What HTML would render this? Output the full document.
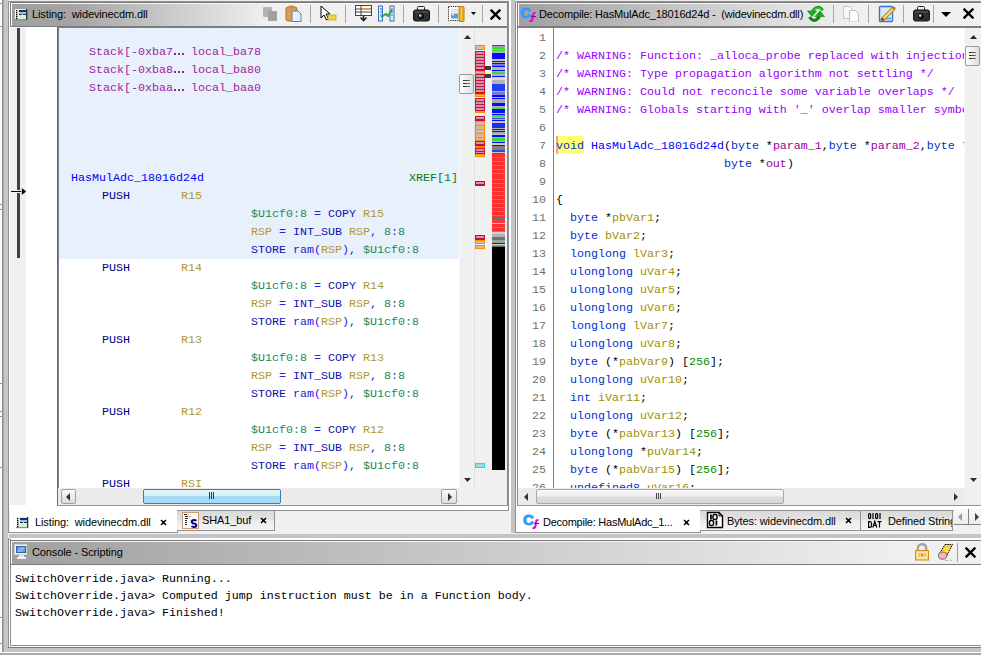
<!DOCTYPE html><html><head><meta charset="utf-8"><style>
html,body{margin:0;padding:0;width:981px;height:655px;overflow:hidden;background:#f0f0f0;position:relative}
div{position:absolute;box-sizing:border-box}
.m{font-family:"Liberation Mono",monospace;font-size:11.667px;line-height:18px;white-space:pre}
.u{font-family:"Liberation Sans",sans-serif;font-size:11px;line-height:13px;white-space:pre;letter-spacing:-0.12px}
</style></head><body>
<div style="left:0px;top:0px;width:2px;height:655px;background:#fbfbfb"></div><div style="left:2px;top:0px;width:1px;height:655px;background:#8e8e8e"></div><div style="left:0px;top:3px;width:2px;height:1px;background:#9a9a9a"></div><div style="left:0px;top:26px;width:2px;height:1px;background:#9a9a9a"></div><div style="left:0px;top:204px;width:2px;height:1px;background:#9a9a9a"></div><div style="left:0px;top:209px;width:2px;height:1px;background:#9a9a9a"></div><div style="left:0px;top:383px;width:2px;height:1px;background:#9a9a9a"></div><div style="left:0px;top:411px;width:2px;height:1px;background:#9a9a9a"></div><div style="left:0px;top:416px;width:2px;height:1px;background:#9a9a9a"></div><div style="left:0px;top:467px;width:2px;height:1px;background:#9a9a9a"></div><div style="left:0px;top:617px;width:2px;height:1px;background:#9a9a9a"></div><div style="left:0px;top:643px;width:2px;height:1px;background:#9a9a9a"></div><div style="left:3px;top:0px;width:5px;height:655px;background:#c6c6c6"></div><div style="left:3px;top:0px;width:1px;height:655px;background:#a8a8a8"></div><div style="left:8px;top:1px;width:501px;height:510px;border:1px solid #8e9298;border-bottom:none;background:#fff"></div><div style="left:10px;top:2px;width:498px;height:25px;border:1px solid #7a7a7a;border-right:none;background:linear-gradient(to right,#a0a0a0 0px,#a4a4a4 60px,#f0f0f0 258px,#f0f0f0 100%)"></div><div style="left:11px;top:3px;width:496px;height:1px;background:#f4f4f4"></div><div style="left:11px;top:3px;width:1px;height:23px;background:#ffffff"></div><div style="left:507px;top:2px;width:1px;height:504px;background:#7e848c"></div><div class="u" style="left:32px;top:8px;color:#000;">Listing:  widevinecdm.dll</div><div style="left:10px;top:27px;width:497px;height:478px;background:#ffffff"></div><div style="left:10px;top:28px;width:16px;height:477px;background:#efefef"></div><div style="left:17px;top:28px;width:3px;height:230px;background:#404040"></div><div style="left:16px;top:190px;width:5px;height:3px;background:#efefef"></div><div style="left:11px;top:191px;width:12px;height:1px;background:#000"></div><svg style="position:absolute;left:21px;top:187px" width="6" height="9" viewBox="0 0 6 9"><path d="M0.5 0.5 L5.5 4.5 L0.5 8.5 Z" fill="#000" stroke="#fff" stroke-width="0.6"/></svg><div style="left:57px;top:27px;width:1px;height:478px;background:#6a6a6a"></div><div style="left:58px;top:27px;width:1px;height:461px;background:#7a8090"></div><div style="left:58px;top:27px;width:449px;height:1px;background:#7a8090"></div><div style="left:59px;top:28px;width:400px;height:231px;background:#e8f0fc"></div><div style="left:459px;top:28px;width:15px;height:460px;background:#f0f0f0"></div><div style="left:459px;top:28px;width:1px;height:460px;background:#fafafa"></div><svg style="position:absolute;left:464px;top:35px" width="7" height="4" viewBox="0 0 7 4"><path d="M0 4 L3.5 0 L7 4 Z" fill="#2a2a2a"/></svg><svg style="position:absolute;left:464px;top:478px" width="7" height="4" viewBox="0 0 7 4"><path d="M0 0 L3.5 4 L7 0 Z" fill="#2a2a2a"/></svg><div style="left:459px;top:74px;width:15px;height:20px;border:1px solid #9a9a9a;border-radius:2px;background:linear-gradient(to right,#fdfdfd,#e0e0e0)"></div><div style="left:463px;top:80px;width:7px;height:1px;background:linear-gradient(to right,#222,#777)"></div><div style="left:463px;top:83px;width:7px;height:1px;background:linear-gradient(to right,#222,#777)"></div><div style="left:463px;top:86px;width:7px;height:1px;background:linear-gradient(to right,#222,#777)"></div><div style="left:474px;top:28px;width:33px;height:477px;background:#f0f0f0"></div><div style="left:474px;top:28px;width:1px;height:460px;background:#e2e2e2"></div><div style="left:475px;top:45px;width:10px;height:5px;border:1px solid #ff8a00;background:repeating-linear-gradient(to bottom,#d8b898 0px,#d8b898 3px,#f09030 3px,#f09030 4px)"></div><div style="left:475px;top:51px;width:10px;height:20px;border:1px solid #c8103c;background:repeating-linear-gradient(to bottom,#c898a8 0px,#c898a8 2px,#c81040 2px,#c81040 3px)"></div><div style="left:475px;top:71px;width:10px;height:3px;border:1px solid #ff8a00;background:repeating-linear-gradient(to bottom,#d8b898 0px,#d8b898 3px,#f09030 3px,#f09030 4px)"></div><div style="left:475px;top:74px;width:10px;height:20px;border:1px solid #c8103c;background:repeating-linear-gradient(to bottom,#c898a8 0px,#c898a8 2px,#c81040 2px,#c81040 3px)"></div><div style="left:475px;top:94px;width:10px;height:3px;border:1px solid #ff8a00;background:repeating-linear-gradient(to bottom,#d8b898 0px,#d8b898 3px,#f09030 3px,#f09030 4px)"></div><div style="left:475px;top:98px;width:10px;height:13px;border:1px solid #c8103c;background:repeating-linear-gradient(to bottom,#c898a8 0px,#c898a8 2px,#c81040 2px,#c81040 3px)"></div><div style="left:475px;top:111px;width:10px;height:2px;border:1px solid #ff8a00;background:repeating-linear-gradient(to bottom,#d8b898 0px,#d8b898 3px,#f09030 3px,#f09030 4px)"></div><div style="left:475px;top:116px;width:10px;height:5px;border:1px solid #c8103c;background:repeating-linear-gradient(to bottom,#c898a8 0px,#c898a8 2px,#c81040 2px,#c81040 3px)"></div><div style="left:475px;top:121px;width:10px;height:20px;border:1px solid #ff8a00;background:repeating-linear-gradient(to bottom,#d8b898 0px,#d8b898 3px,#f09030 3px,#f09030 4px)"></div><div style="left:475px;top:141px;width:10px;height:5px;border:1px solid #c8103c;background:repeating-linear-gradient(to bottom,#c898a8 0px,#c898a8 2px,#c81040 2px,#c81040 3px)"></div><div style="left:475px;top:146px;width:10px;height:1px;border:1px solid #ff8a00;background:repeating-linear-gradient(to bottom,#d8b898 0px,#d8b898 3px,#f09030 3px,#f09030 4px)"></div><div style="left:475px;top:148px;width:10px;height:6px;border:1px solid #c8103c;background:repeating-linear-gradient(to bottom,#c898a8 0px,#c898a8 2px,#c81040 2px,#c81040 3px)"></div><div style="left:475px;top:154px;width:10px;height:3px;border:1px solid #ff8a00;background:repeating-linear-gradient(to bottom,#d8b898 0px,#d8b898 3px,#f09030 3px,#f09030 4px)"></div><div style="left:475px;top:181px;width:10px;height:5px;border:1px solid #c8103c;background:repeating-linear-gradient(to bottom,#c898a8 0px,#c898a8 2px,#c81040 2px,#c81040 3px)"></div><div style="left:475px;top:235px;width:10px;height:5px;border:1px solid #c8103c;background:repeating-linear-gradient(to bottom,#c898a8 0px,#c898a8 2px,#c81040 2px,#c81040 3px)"></div><div style="left:475px;top:240px;width:10px;height:4px;border:1px solid #ff8a00;background:repeating-linear-gradient(to bottom,#d8b898 0px,#d8b898 3px,#f09030 3px,#f09030 4px)"></div><div style="left:475px;top:245px;width:10px;height:4px;border:1px solid #ff8a00;background:repeating-linear-gradient(to bottom,#d8b898 0px,#d8b898 3px,#f09030 3px,#f09030 4px)"></div><div style="left:475px;top:463px;width:10px;height:5px;border:1px solid #00e8f0;background:#a0d8dc"></div><div style="left:485px;top:66px;width:6px;height:4px;background:#3c3c3c"></div><div style="left:485px;top:74px;width:6px;height:4px;background:#3c3c3c"></div><div style="left:492px;top:45px;width:13px;height:1px;background:#505050"></div><div style="left:492px;top:46px;width:13px;height:1px;background:#a0a0c0"></div><div style="left:492px;top:47px;width:13px;height:2px;background:#34dc34"></div><div style="left:492px;top:49px;width:13px;height:1px;background:#b0b0b8"></div><div style="left:492px;top:50px;width:13px;height:1px;background:#34dc34"></div><div style="left:492px;top:51px;width:13px;height:2px;background:#b0b0b8"></div><div style="left:492px;top:53px;width:13px;height:6px;background:#0a0aff"></div><div style="left:492px;top:59px;width:13px;height:2px;background:#c4c4b4"></div><div style="left:492px;top:61px;width:13px;height:1px;background:#0a0aff"></div><div style="left:492px;top:62px;width:13px;height:1px;background:#b0b0b8"></div><div style="left:492px;top:63px;width:13px;height:1px;background:#0a0aff"></div><div style="left:492px;top:64px;width:13px;height:2px;background:#7878d8"></div><div style="left:492px;top:66px;width:13px;height:1px;background:#0a0aff"></div><div style="left:492px;top:67px;width:13px;height:3px;background:#b8b8b0"></div><div style="left:492px;top:70px;width:13px;height:1px;background:#0a0aff"></div><div style="left:492px;top:71px;width:13px;height:1px;background:#b0b0b8"></div><div style="left:492px;top:72px;width:13px;height:2px;background:#34dc34"></div><div style="left:492px;top:74px;width:13px;height:2px;background:#b0b0b8"></div><div style="left:492px;top:76px;width:13px;height:1px;background:#0a0aff"></div><div style="left:492px;top:77px;width:13px;height:3px;background:#d8d8d8"></div><div style="left:492px;top:80px;width:13px;height:4px;background:#b4b4b4"></div><div style="left:492px;top:84px;width:13px;height:7px;background:#2040f0"></div><div style="left:492px;top:91px;width:13px;height:1px;background:#b0b0b8"></div><div style="left:492px;top:92px;width:13px;height:3px;background:#7878d8"></div><div style="left:492px;top:95px;width:13px;height:2px;background:#0a0aff"></div><div style="left:492px;top:97px;width:13px;height:1px;background:#b0b0b8"></div><div style="left:492px;top:98px;width:13px;height:1px;background:#0a0aff"></div><div style="left:492px;top:99px;width:13px;height:4px;background:#a8a8a8"></div><div style="left:492px;top:103px;width:13px;height:3px;background:#0a0aff"></div><div style="left:492px;top:106px;width:13px;height:2px;background:#a8a8d0"></div><div style="left:492px;top:108px;width:13px;height:1px;background:#34dc34"></div><div style="left:492px;top:109px;width:13px;height:4px;background:#0a0aff"></div><div style="left:492px;top:113px;width:13px;height:1px;background:#b0b0b8"></div><div style="left:492px;top:114px;width:13px;height:1px;background:#0a0aff"></div><div style="left:492px;top:115px;width:13px;height:2px;background:#34dc34"></div><div style="left:492px;top:117px;width:13px;height:1px;background:#b0b0b8"></div><div style="left:492px;top:118px;width:13px;height:1px;background:#4848e8"></div><div style="left:492px;top:119px;width:13px;height:1px;background:#b0b0b8"></div><div style="left:492px;top:120px;width:13px;height:1px;background:#0a0aff"></div><div style="left:492px;top:121px;width:13px;height:2px;background:#c4c4b4"></div><div style="left:492px;top:123px;width:13px;height:5px;background:#2030e8"></div><div style="left:492px;top:128px;width:13px;height:1px;background:#b0b0b8"></div><div style="left:492px;top:129px;width:13px;height:1px;background:#0a0aff"></div><div style="left:492px;top:130px;width:13px;height:1px;background:#b0b0b8"></div><div style="left:492px;top:131px;width:13px;height:1px;background:#0a0aff"></div><div style="left:492px;top:132px;width:13px;height:2px;background:#a8a8a8"></div><div style="left:492px;top:134px;width:13px;height:1px;background:#c0c0e0"></div><div style="left:492px;top:135px;width:13px;height:2px;background:#0a0aff"></div><div style="left:492px;top:137px;width:13px;height:1px;background:#b0b0b8"></div><div style="left:492px;top:138px;width:13px;height:3px;background:#34dc34"></div><div style="left:492px;top:141px;width:13px;height:1px;background:#b0b0b8"></div><div style="left:492px;top:142px;width:13px;height:1px;background:#0a0aff"></div><div style="left:492px;top:143px;width:13px;height:2px;background:#d0d0b8"></div><div style="left:492px;top:145px;width:13px;height:1px;background:#0a0aff"></div><div style="left:492px;top:146px;width:13px;height:4px;background:#808080"></div><div style="left:492px;top:150px;width:13px;height:2px;background:#3040f0"></div><div style="left:492px;top:152px;width:13px;height:1px;background:#c0c8c0"></div><div style="left:492px;top:153px;width:13px;height:1px;background:#805050"></div><div style="left:492px;top:154px;width:13px;height:21px;background:repeating-linear-gradient(to bottom,#ff3030 0px,#ff3030 3px,#ff5a5a 3px,#ff5a5a 4px)"></div><div style="left:492px;top:175px;width:13px;height:1px;background:#707070"></div><div style="left:492px;top:176px;width:13px;height:42px;background:repeating-linear-gradient(to bottom,#ff3030 0px,#ff3030 3px,#ff5a5a 3px,#ff5a5a 4px)"></div><div style="left:492px;top:218px;width:13px;height:1px;background:#707070"></div><div style="left:492px;top:219px;width:13px;height:4px;background:#ff3434"></div><div style="left:492px;top:223px;width:13px;height:1px;background:#ffb0b0"></div><div style="left:492px;top:224px;width:13px;height:8px;background:repeating-linear-gradient(to bottom,#ff3030 0px,#ff3030 3px,#ff5a5a 3px,#ff5a5a 4px)"></div><div style="left:492px;top:232px;width:13px;height:2px;background:#d0d0d0"></div><div style="left:492px;top:234px;width:13px;height:3px;background:#b0b0b8"></div><div style="left:492px;top:237px;width:13px;height:3px;background:#687868"></div><div style="left:492px;top:240px;width:13px;height:3px;background:#98a898"></div><div style="left:492px;top:243px;width:13px;height:1px;background:#0a0aff"></div><div style="left:492px;top:244px;width:13px;height:1px;background:#d0d0d0"></div><div style="left:492px;top:245px;width:13px;height:1px;background:#34dc34"></div><div style="left:492px;top:246px;width:13px;height:1px;background:#607060"></div><div style="left:492px;top:247px;width:13px;height:223px;background:#000"></div><div style="left:58px;top:488px;width:401px;height:17px;background:#ebebeb"></div><div style="left:61px;top:489px;width:15px;height:15px;border:1px solid #a0a0a0;border-radius:2px;background:linear-gradient(#fafafa,#dcdcdc)"></div><div style="left:66px;top:493px;width:0;height:0;border-top:4px solid transparent;border-bottom:4px solid transparent;border-right:4px solid #333"></div><div style="left:441px;top:489px;width:16px;height:15px;border:1px solid #a0a0a0;border-radius:2px;background:linear-gradient(#fafafa,#dcdcdc)"></div><div style="left:448px;top:493px;width:0;height:0;border-top:4px solid transparent;border-bottom:4px solid transparent;border-left:4px solid #333"></div><div style="left:459px;top:488px;width:15px;height:17px;background:#f0f0f0"></div><div style="left:143px;top:489px;width:138px;height:15px;border:1px solid #3c7fb1;border-radius:2px;background:linear-gradient(#e3f4fc 0,#d8effb 45%,#a9dbf6 50%,#a9dbf6 100%)"></div><div style="left:209px;top:492px;width:1px;height:7px;background:#1f3f60"></div><div style="left:211px;top:492px;width:1px;height:7px;background:#1f3f60"></div><div style="left:213px;top:492px;width:1px;height:7px;background:#1f3f60"></div><div style="left:57px;top:505px;width:451px;height:1px;background:#8e949c"></div><div style="left:474px;top:505px;width:34px;height:1px;background:#8e949c"></div><div style="left:10px;top:506px;width:498px;height:26px;background:#ffffff"></div><div style="left:8px;top:511px;width:1px;height:22px;background:#8e9298"></div><div style="left:8px;top:532px;width:170px;height:1px;background:#8e9298"></div><div style="left:177px;top:510px;width:1px;height:22px;background:#8e9298"></div><div style="left:177px;top:510px;width:332px;height:1px;background:#8e9298"></div><div style="left:178px;top:511px;width:330px;height:22px;background:#f0f0f0"></div><div style="left:177px;top:510px;width:98px;height:21px;border:1px solid #8e9298;border-left:none;background:linear-gradient(#dadada 0,#e2e2e2 45%,#ededed 55%,#f4f4f4 100%)"></div><div class="m" style="left:89px;top:43px"><span style="color:#9b1f9b">Stack[-0xba7</span></div><div style="left:174px;top:53px;width:2px;height:2px;background:#9b1f9b"></div><div style="left:178px;top:53px;width:2px;height:2px;background:#9b1f9b"></div><div style="left:182px;top:53px;width:2px;height:2px;background:#9b1f9b"></div><div class="m" style="left:191px;top:43px"><span style="color:#9b1f9b">local_ba78</span></div><div class="m" style="left:89px;top:61px"><span style="color:#9b1f9b">Stack[-0xba8</span></div><div style="left:174px;top:71px;width:2px;height:2px;background:#9b1f9b"></div><div style="left:178px;top:71px;width:2px;height:2px;background:#9b1f9b"></div><div style="left:182px;top:71px;width:2px;height:2px;background:#9b1f9b"></div><div class="m" style="left:191px;top:61px"><span style="color:#9b1f9b">local_ba80</span></div><div class="m" style="left:89px;top:79px"><span style="color:#9b1f9b">Stack[-0xbaa</span></div><div style="left:174px;top:89px;width:2px;height:2px;background:#9b1f9b"></div><div style="left:178px;top:89px;width:2px;height:2px;background:#9b1f9b"></div><div style="left:182px;top:89px;width:2px;height:2px;background:#9b1f9b"></div><div class="m" style="left:191px;top:79px"><span style="color:#9b1f9b">local_baa0</span></div><div class="m" style="left:71px;top:169px"><span style="color:#0000ff">HasMulAdc_18016d24d</span></div><div class="m" style="left:409px;top:169px"><span style="color:#008000">XREF[1]</span></div><div class="m" style="left:102px;top:187px"><span style="color:#000080">PUSH</span></div><div class="m" style="left:181px;top:187px"><span style="color:#ae9838">R15</span></div><div class="m" style="left:251px;top:205px"><span style="color:#22885a">$U1cf0:8</span><span style="color:#2020e8"> = </span><span style="color:#1010b0">COPY</span><span style="color:#2020e8"> </span><span style="color:#ae9838">R15</span></div><div class="m" style="left:251px;top:223px"><span style="color:#ae9838">RSP</span><span style="color:#2020e8"> = </span><span style="color:#1010b0">INT_SUB</span><span style="color:#2020e8"> </span><span style="color:#ae9838">RSP</span><span style="color:#2020e8">, </span><span style="color:#22885a">8</span><span style="color:#2020e8">:</span><span style="color:#22885a">8</span></div><div class="m" style="left:251px;top:241px"><span style="color:#1010b0">STORE</span><span style="color:#2020e8"> ram(</span><span style="color:#ae9838">RSP</span><span style="color:#2020e8">), </span><span style="color:#22885a">$U1cf0:8</span></div><div class="m" style="left:102px;top:259px"><span style="color:#000080">PUSH</span></div><div class="m" style="left:181px;top:259px"><span style="color:#ae9838">R14</span></div><div class="m" style="left:251px;top:277px"><span style="color:#22885a">$U1cf0:8</span><span style="color:#2020e8"> = </span><span style="color:#1010b0">COPY</span><span style="color:#2020e8"> </span><span style="color:#ae9838">R14</span></div><div class="m" style="left:251px;top:295px"><span style="color:#ae9838">RSP</span><span style="color:#2020e8"> = </span><span style="color:#1010b0">INT_SUB</span><span style="color:#2020e8"> </span><span style="color:#ae9838">RSP</span><span style="color:#2020e8">, </span><span style="color:#22885a">8</span><span style="color:#2020e8">:</span><span style="color:#22885a">8</span></div><div class="m" style="left:251px;top:313px"><span style="color:#1010b0">STORE</span><span style="color:#2020e8"> ram(</span><span style="color:#ae9838">RSP</span><span style="color:#2020e8">), </span><span style="color:#22885a">$U1cf0:8</span></div><div class="m" style="left:102px;top:331px"><span style="color:#000080">PUSH</span></div><div class="m" style="left:181px;top:331px"><span style="color:#ae9838">R13</span></div><div class="m" style="left:251px;top:349px"><span style="color:#22885a">$U1cf0:8</span><span style="color:#2020e8"> = </span><span style="color:#1010b0">COPY</span><span style="color:#2020e8"> </span><span style="color:#ae9838">R13</span></div><div class="m" style="left:251px;top:367px"><span style="color:#ae9838">RSP</span><span style="color:#2020e8"> = </span><span style="color:#1010b0">INT_SUB</span><span style="color:#2020e8"> </span><span style="color:#ae9838">RSP</span><span style="color:#2020e8">, </span><span style="color:#22885a">8</span><span style="color:#2020e8">:</span><span style="color:#22885a">8</span></div><div class="m" style="left:251px;top:385px"><span style="color:#1010b0">STORE</span><span style="color:#2020e8"> ram(</span><span style="color:#ae9838">RSP</span><span style="color:#2020e8">), </span><span style="color:#22885a">$U1cf0:8</span></div><div class="m" style="left:102px;top:403px"><span style="color:#000080">PUSH</span></div><div class="m" style="left:181px;top:403px"><span style="color:#ae9838">R12</span></div><div class="m" style="left:251px;top:421px"><span style="color:#22885a">$U1cf0:8</span><span style="color:#2020e8"> = </span><span style="color:#1010b0">COPY</span><span style="color:#2020e8"> </span><span style="color:#ae9838">R12</span></div><div class="m" style="left:251px;top:439px"><span style="color:#ae9838">RSP</span><span style="color:#2020e8"> = </span><span style="color:#1010b0">INT_SUB</span><span style="color:#2020e8"> </span><span style="color:#ae9838">RSP</span><span style="color:#2020e8">, </span><span style="color:#22885a">8</span><span style="color:#2020e8">:</span><span style="color:#22885a">8</span></div><div class="m" style="left:251px;top:457px"><span style="color:#1010b0">STORE</span><span style="color:#2020e8"> ram(</span><span style="color:#ae9838">RSP</span><span style="color:#2020e8">), </span><span style="color:#22885a">$U1cf0:8</span></div><div style="left:58px;top:470px;width:401px;height:18px;overflow:hidden"><div class="m" style="left:44px;top:5px"><span style="color:#000080">PUSH</span></div><div class="m" style="left:123px;top:5px"><span style="color:#ae9838">RSI</span></div></div><div class="u" style="left:35px;top:516px;color:#000;">Listing:  widevinecdm.dll</div><div class="u" style="left:202px;top:514px;color:#000;">SHA1_buf</div><div style="left:509px;top:0px;width:6px;height:655px;background:#f0f0f0"></div><div style="left:511px;top:0px;width:4px;height:534px;background:#c4c4c4"></div><div style="left:509px;top:1px;width:1px;height:510px;background:#ffffff"></div><div style="left:510px;top:1px;width:1px;height:510px;background:#ffffff"></div><div style="left:515px;top:1px;width:466px;height:510px;border:1px solid #8e9298;border-bottom:none;border-right:none;background:#fff"></div><div style="left:517px;top:2px;width:464px;height:25px;border:1px solid #7a7a7a;border-right:none;background:linear-gradient(to right,#a0a0a0 0px,#a2a2a2 10px,#f0f0f0 335px,#f0f0f0 100%)"></div><div style="left:518px;top:3px;width:463px;height:1px;background:#f4f4f4"></div><div style="left:518px;top:3px;width:1px;height:23px;background:#ffffff"></div><div class="u" style="left:539px;top:8px;color:#000;letter-spacing:-0.18px">Decompile: HasMulAdc_18016d24d -  (widevinecdm.dll)</div><div style="left:517px;top:27px;width:464px;height:479px;border-left:1px solid #8a8a8a;border-bottom:1px solid #8e949c;background:#fff"></div><div style="left:517px;top:27px;width:464px;height:1px;background:#7a8090"></div><div style="left:553px;top:27px;width:1px;height:461px;background:#808080"></div><div style="left:556px;top:136px;width:28px;height:18px;background:#ffff78"></div><div style="left:556px;top:136px;width:2px;height:18px;background:#ff9a9a"></div><div style="left:518px;top:27px;width:446px;height:461px;overflow:hidden"><div class="m" style="left:21px;top:2px"><span style="color:#707070">1</span></div><div class="m" style="left:21px;top:20px"><span style="color:#707070">2</span></div><div class="m" style="left:38px;top:20px"><span style="color:#9600ff">/* WARNING: Function: _alloca_probe replaced with injection: alloca_probe */</span></div><div class="m" style="left:21px;top:38px"><span style="color:#707070">3</span></div><div class="m" style="left:38px;top:38px"><span style="color:#9600ff">/* WARNING: Type propagation algorithm not settling */</span></div><div class="m" style="left:21px;top:56px"><span style="color:#707070">4</span></div><div class="m" style="left:38px;top:56px"><span style="color:#9600ff">/* WARNING: Could not reconcile some variable overlaps */</span></div><div class="m" style="left:21px;top:74px"><span style="color:#707070">5</span></div><div class="m" style="left:38px;top:74px"><span style="color:#9600ff">/* WARNING: Globals starting with &#x27;_&#x27; overlap smaller symbols at the same address */</span></div><div class="m" style="left:21px;top:92px"><span style="color:#707070">6</span></div><div class="m" style="left:21px;top:110px"><span style="color:#707070">7</span></div><div class="m" style="left:38px;top:110px"><span style="color:#0033cc">void</span><span style="color:#000000"> </span><span style="color:#0000ff">HasMulAdc_18016d24d</span><span style="color:#000000">(</span><span style="color:#0033cc">byte</span><span style="color:#000000"> *</span><span style="color:#9b009b">param_1</span><span style="color:#000000">,</span><span style="color:#0033cc">byte</span><span style="color:#000000"> *</span><span style="color:#9b009b">param_2</span><span style="color:#000000">,</span><span style="color:#0033cc">byte</span><span style="color:#000000"> *</span><span style="color:#9b009b">param_3</span><span style="color:#000000">,</span></div><div class="m" style="left:21px;top:128px"><span style="color:#707070">8</span></div><div class="m" style="left:38px;top:128px"><span style="color:#000000">                        </span><span style="color:#0033cc">byte</span><span style="color:#000000"> *</span><span style="color:#9b009b">out</span><span style="color:#000000">)</span></div><div class="m" style="left:21px;top:146px"><span style="color:#707070">9</span></div><div class="m" style="left:14px;top:164px"><span style="color:#707070">10</span></div><div class="m" style="left:38px;top:164px"><span style="color:#000000">{</span></div><div class="m" style="left:14px;top:182px"><span style="color:#707070">11</span></div><div class="m" style="left:38px;top:182px"><span style="color:#000000">  </span><span style="color:#0033cc">byte</span><span style="color:#000000"> *</span><span style="color:#a09000">pbVar1</span><span style="color:#000000">;</span></div><div class="m" style="left:14px;top:200px"><span style="color:#707070">12</span></div><div class="m" style="left:38px;top:200px"><span style="color:#000000">  </span><span style="color:#0033cc">byte</span><span style="color:#000000"> </span><span style="color:#a09000">bVar2</span><span style="color:#000000">;</span></div><div class="m" style="left:14px;top:218px"><span style="color:#707070">13</span></div><div class="m" style="left:38px;top:218px"><span style="color:#000000">  </span><span style="color:#0033cc">longlong</span><span style="color:#000000"> </span><span style="color:#a09000">lVar3</span><span style="color:#000000">;</span></div><div class="m" style="left:14px;top:236px"><span style="color:#707070">14</span></div><div class="m" style="left:38px;top:236px"><span style="color:#000000">  </span><span style="color:#0033cc">ulonglong</span><span style="color:#000000"> </span><span style="color:#a09000">uVar4</span><span style="color:#000000">;</span></div><div class="m" style="left:14px;top:254px"><span style="color:#707070">15</span></div><div class="m" style="left:38px;top:254px"><span style="color:#000000">  </span><span style="color:#0033cc">ulonglong</span><span style="color:#000000"> </span><span style="color:#a09000">uVar5</span><span style="color:#000000">;</span></div><div class="m" style="left:14px;top:272px"><span style="color:#707070">16</span></div><div class="m" style="left:38px;top:272px"><span style="color:#000000">  </span><span style="color:#0033cc">ulonglong</span><span style="color:#000000"> </span><span style="color:#a09000">uVar6</span><span style="color:#000000">;</span></div><div class="m" style="left:14px;top:290px"><span style="color:#707070">17</span></div><div class="m" style="left:38px;top:290px"><span style="color:#000000">  </span><span style="color:#0033cc">longlong</span><span style="color:#000000"> </span><span style="color:#a09000">lVar7</span><span style="color:#000000">;</span></div><div class="m" style="left:14px;top:308px"><span style="color:#707070">18</span></div><div class="m" style="left:38px;top:308px"><span style="color:#000000">  </span><span style="color:#0033cc">ulonglong</span><span style="color:#000000"> </span><span style="color:#a09000">uVar8</span><span style="color:#000000">;</span></div><div class="m" style="left:14px;top:326px"><span style="color:#707070">19</span></div><div class="m" style="left:38px;top:326px"><span style="color:#000000">  </span><span style="color:#0033cc">byte</span><span style="color:#000000"> (*</span><span style="color:#a09000">pabVar9</span><span style="color:#000000">) [</span><span style="color:#008e00">256</span><span style="color:#000000">]</span><span style="color:#000000">;</span></div><div class="m" style="left:14px;top:344px"><span style="color:#707070">20</span></div><div class="m" style="left:38px;top:344px"><span style="color:#000000">  </span><span style="color:#0033cc">ulonglong</span><span style="color:#000000"> </span><span style="color:#a09000">uVar10</span><span style="color:#000000">;</span></div><div class="m" style="left:14px;top:362px"><span style="color:#707070">21</span></div><div class="m" style="left:38px;top:362px"><span style="color:#000000">  </span><span style="color:#0033cc">int</span><span style="color:#000000"> </span><span style="color:#a09000">iVar11</span><span style="color:#000000">;</span></div><div class="m" style="left:14px;top:380px"><span style="color:#707070">22</span></div><div class="m" style="left:38px;top:380px"><span style="color:#000000">  </span><span style="color:#0033cc">ulonglong</span><span style="color:#000000"> </span><span style="color:#a09000">uVar12</span><span style="color:#000000">;</span></div><div class="m" style="left:14px;top:398px"><span style="color:#707070">23</span></div><div class="m" style="left:38px;top:398px"><span style="color:#000000">  </span><span style="color:#0033cc">byte</span><span style="color:#000000"> (*</span><span style="color:#a09000">pabVar13</span><span style="color:#000000">) [</span><span style="color:#008e00">256</span><span style="color:#000000">]</span><span style="color:#000000">;</span></div><div class="m" style="left:14px;top:416px"><span style="color:#707070">24</span></div><div class="m" style="left:38px;top:416px"><span style="color:#000000">  </span><span style="color:#0033cc">ulonglong</span><span style="color:#000000"> *</span><span style="color:#a09000">puVar14</span><span style="color:#000000">;</span></div><div class="m" style="left:14px;top:434px"><span style="color:#707070">25</span></div><div class="m" style="left:38px;top:434px"><span style="color:#000000">  </span><span style="color:#0033cc">byte</span><span style="color:#000000"> (*</span><span style="color:#a09000">pabVar15</span><span style="color:#000000">) [</span><span style="color:#008e00">256</span><span style="color:#000000">]</span><span style="color:#000000">;</span></div><div class="m" style="left:14px;top:452px"><span style="color:#707070">26</span></div><div class="m" style="left:38px;top:452px"><span style="color:#000000">  </span><span style="color:#0033cc">undefined8</span><span style="color:#000000"> </span><span style="color:#a09000">uVar16</span><span style="color:#000000">;</span></div></div><div style="left:553px;top:27px;width:1px;height:461px;background:#808080"></div><div style="left:964px;top:28px;width:17px;height:460px;background:#f0f0f0"></div><div style="left:964px;top:28px;width:1px;height:460px;background:#fafafa"></div><svg style="position:absolute;left:970px;top:35px" width="7" height="4" viewBox="0 0 7 4"><path d="M0 4 L3.5 0 L7 4 Z" fill="#2a2a2a"/></svg><svg style="position:absolute;left:970px;top:478px" width="7" height="4" viewBox="0 0 7 4"><path d="M0 0 L3.5 4 L7 0 Z" fill="#2a2a2a"/></svg><div style="left:965px;top:46px;width:15px;height:20px;border:1px solid #9a9a9a;border-radius:2px;background:linear-gradient(to right,#fdfdfd,#dcdcdc)"></div><div style="left:969px;top:52px;width:7px;height:1px;background:linear-gradient(to right,#222,#777)"></div><div style="left:969px;top:55px;width:7px;height:1px;background:linear-gradient(to right,#222,#777)"></div><div style="left:969px;top:58px;width:7px;height:1px;background:linear-gradient(to right,#222,#777)"></div><div style="left:518px;top:488px;width:446px;height:17px;background:#ebebeb"></div><div style="left:524px;top:493px;width:0;height:0;border-top:4px solid transparent;border-bottom:4px solid transparent;border-right:4px solid #333"></div><div style="left:954px;top:493px;width:0;height:0;border-top:4px solid transparent;border-bottom:4px solid transparent;border-left:4px solid #333"></div><div style="left:536px;top:489px;width:248px;height:15px;border:1px solid #a8a8a8;border-radius:2px;background:linear-gradient(#f8f8f8 0,#efefef 45%,#dedede 55%,#d8d8d8 100%)"></div><div style="left:656px;top:493px;width:1px;height:6px;background:#444"></div><div style="left:658px;top:493px;width:1px;height:6px;background:#444"></div><div style="left:660px;top:493px;width:1px;height:6px;background:#444"></div><div style="left:964px;top:488px;width:17px;height:17px;background:#f0f0f0"></div><div style="left:516px;top:506px;width:465px;height:4px;background:#fff"></div><div style="left:515px;top:511px;width:1px;height:22px;background:#8e9298"></div><div style="left:515px;top:532px;width:186px;height:1px;background:#8e9298"></div><div style="left:700px;top:510px;width:1px;height:22px;background:#8e9298"></div><div style="left:700px;top:510px;width:281px;height:1px;background:#8e9298"></div><div style="left:516px;top:511px;width:184px;height:21px;background:#fff"></div><div style="left:701px;top:511px;width:280px;height:22px;background:#f0f0f0"></div><div style="left:700px;top:510px;width:161px;height:21px;border:1px solid #8e9298;border-left:none;background:linear-gradient(#dadada 0,#e2e2e2 45%,#ededed 55%,#f4f4f4 100%)"></div><div style="left:861px;top:510px;width:92px;height:21px;border:1px solid #8e9298;border-left:none;border-right:none;background:linear-gradient(#dadada 0,#e2e2e2 45%,#ededed 55%,#f4f4f4 100%)"></div><div class="u" style="left:543px;top:516px;color:#000;letter-spacing:-0.25px">Decompile: HasMulAdc_1...</div><div class="u" style="left:727px;top:515px;color:#000;">Bytes: widevinecdm.dll</div><div style="left:886px;top:510px;width:66px;height:20px;overflow:hidden"><div class="u" style="left:2px;top:5px;color:#000;">Defined Strings</div></div><div style="left:952px;top:511px;width:1px;height:19px;background:#8e9298"></div><div style="left:954px;top:509px;width:15px;height:16px;background:linear-gradient(#f8f8f8,#ececec)"></div><div style="left:954px;top:524px;width:27px;height:1px;background:#808080"></div><div style="left:968px;top:509px;width:1px;height:16px;background:#808080"></div><div style="left:969px;top:509px;width:12px;height:15px;background:linear-gradient(#f8f8f8,#ececec)"></div><div style="left:958px;top:513px;width:0;height:0;border-top:4px solid transparent;border-bottom:4px solid transparent;border-right:4px solid #9a9a9a"></div><div style="left:975px;top:513px;width:0;height:0;border-top:4px solid transparent;border-bottom:4px solid transparent;border-left:4px solid #404040"></div><svg style="position:absolute;left:706px;top:511px" width="18" height="18" viewBox="0 0 18 18"><path d="M1.5 1.5 H13 L16.5 5 V16.5 H1.5 Z" fill="#fff" stroke="#000" stroke-width="1.4"/><path d="M13 1.5 V5 H16.5" fill="none" stroke="#000" stroke-width="1"/><rect x="4" y="3.5" width="1.8" height="5" fill="#000"/><rect x="7" y="3.5" width="4" height="5" rx="1.6" fill="none" stroke="#000" stroke-width="1.5"/><rect x="3.5" y="9.5" width="4" height="5" rx="1.6" fill="none" stroke="#000" stroke-width="1.5"/><rect x="9.5" y="9.5" width="1.8" height="5" fill="#000"/></svg><svg style="position:absolute;left:867px;top:512px" width="16" height="17" viewBox="0 0 16 17"><g fill="none" stroke="#000" stroke-width="1.2"><rect x="1.6" y="1.6" width="2" height="5" rx="1"/><path d="M6 1 V7"/><rect x="8.6" y="1.6" width="2" height="5" rx="1"/><path d="M13 1 V7"/><path d="M1.6 9.6 V15.4 H3 Q4.6 15.4 4.6 12.5 Q4.6 9.6 3 9.6 Z"/><path d="M5.8 15.5 L7.8 9.5 L9.8 15.5 M6.5 13.5 H9"/><path d="M10.5 9.6 H14.5 M12.5 9.6 V15.5"/></g></svg><div style="left:8px;top:533px;width:973px;height:6px;background:#f0f0f0"></div><div style="left:9px;top:534px;width:972px;height:4px;background:#c4c4c4"></div><div style="left:8px;top:538px;width:973px;height:110px;border-left:1px solid #8e9298;background:#fff"></div><div style="left:8px;top:539px;width:3px;height:1px;background:#8e9298"></div><div style="left:10px;top:540px;width:971px;height:25px;border:1px solid #7a7a7a;border-right:none;background:linear-gradient(to right,#a0a0a0 0px,#f0f0f0 900px,#f0f0f0 100%)"></div><div style="left:11px;top:541px;width:970px;height:1px;background:#f4f4f4"></div><div style="left:11px;top:541px;width:1px;height:23px;background:#ffffff"></div><div class="u" style="left:32px;top:546px;color:#000;">Console - Scripting</div><div style="left:10px;top:565px;width:971px;height:81px;border-left:1px solid #8a8e96;border-bottom:1px solid #8a8e96;background:#fff"></div><div style="left:8px;top:647px;width:973px;height:1px;background:#787878"></div><div style="left:8px;top:648px;width:973px;height:4px;background:#c4c4c4"></div><div style="left:0px;top:652px;width:981px;height:1px;background:#ffffff"></div><div style="left:0px;top:653px;width:981px;height:2px;background:#a8a8a8"></div><div class="m" style="left:15px;top:571px;line-height:17px;color:#000">SwitchOverride.java&gt; Running...</div><div class="m" style="left:15px;top:588px;line-height:17px;color:#000">SwitchOverride.java&gt; Computed jump instruction must be in a Function body.</div><div class="m" style="left:15px;top:605px;line-height:17px;color:#000">SwitchOverride.java&gt; Finished!</div><div style="left:14px;top:544px;width:13px;height:11px;background:#f4f4f4;border:1px solid #d0d0d0"></div><div style="left:16px;top:546px;width:10px;height:7px;background:linear-gradient(135deg,#4a80d0,#90b8e8 50%,#5a8ad0);border:1px solid #3060b0"></div><div style="left:19px;top:555px;width:5px;height:2px;background:#e8e8e8"></div><div style="left:17px;top:557px;width:9px;height:2px;background:#f0f0f0"></div><svg style="position:absolute;left:914px;top:543px" width="16" height="18" viewBox="0 0 16 18"><path d="M3.8 8 V6 Q3.8 1.3 8 1.3 Q12.2 1.3 12.2 6 V8" stroke="#a4a4a4" stroke-width="2.4" fill="none"/><rect x="1.5" y="7.5" width="13" height="9.5" fill="#f6d880" stroke="#e08a18"/><rect x="3" y="9" width="10" height="6.5" fill="#fbe7a8"/><path d="M4 11H6.5M4 13H6.5M9.5 11H12M9.5 13H12" stroke="#e0a040"/><rect x="7.3" y="10.5" width="1.4" height="3" fill="#b07010"/></svg><svg style="position:absolute;left:937px;top:543px" width="18" height="19" viewBox="0 0 18 19"><path d="M8 1.5 L15.5 1.5 L9.5 13 L3 10 Z" fill="#f8d038" stroke="#000" stroke-width="1" stroke-dasharray="1.5 0.8"/><path d="M7 6 L13 6 M5.5 8.5 L11.5 8.5" stroke="#fff080" stroke-width="1"/><ellipse cx="5.6" cy="12.6" rx="4.2" ry="3.6" fill="#f0b4bc" stroke="#805058" stroke-width="0.9"/><path d="M8 17.3 H11 M12.5 17.3 H15" stroke="#d0a0a8" stroke-width="1"/></svg><div style="left:957px;top:543px;width:1px;height:19px;background:#a0a0a0"></div><svg style="position:absolute;left:262px;top:6px" width="16" height="16" viewBox="0 0 16 16"><rect x="1" y="1" width="9" height="10" rx="1" fill="#b4b4b4"/><rect x="6" y="5" width="9" height="10" rx="1" fill="#a0a0a0"/></svg><svg style="position:absolute;left:285px;top:5px" width="17" height="17" viewBox="0 0 17 17"><rect x="1" y="2" width="11" height="14" rx="2" fill="#d8a050" stroke="#a87020"/><rect x="4" y="0.5" width="5" height="3" fill="#c89040"/><path d="M7 6 H13 L16 9 V16.5 H7 Z" fill="#e8f0ff" stroke="#5a80c0"/></svg><div style="left:310px;top:5px;width:1px;height:18px;background:#a8a8a8"></div><svg style="position:absolute;left:320px;top:5px" width="17" height="17" viewBox="0 0 17 17"><path d="M1 1 V13 L4 10 L6.5 15 L8.5 14 L6 9 H10 Z" fill="#fff" stroke="#000"/><rect x="8" y="10" width="8" height="5" fill="#f0d050" stroke="#d0a020" stroke-width="0.8"/></svg><div style="left:345px;top:5px;width:1px;height:18px;background:#a8a8a8"></div><svg style="position:absolute;left:355px;top:5px" width="17" height="17" viewBox="0 0 17 17"><rect x="0.5" y="0.5" width="16" height="10" fill="#fff" stroke="#444"/><path d="M0.5 4 H16.5 M0.5 7 H16.5 M6 0.5 V10.5" stroke="#444"/><rect x="7" y="3" width="7" height="2" fill="#f0a020"/><path d="M8.5 10 V15 M5.5 12.5 L8.5 15.5 L11.5 12.5" stroke="#222" stroke-width="1.6" fill="none"/></svg><svg style="position:absolute;left:378px;top:5px" width="17" height="17" viewBox="0 0 17 17"><rect x="0.5" y="1" width="4" height="15" fill="#e0ecfa" stroke="#3a70c0"/><rect x="12" y="1" width="4" height="15" fill="#e0ecfa" stroke="#3a70c0"/><path d="M2 4H4M2 7H4M2 10H4M13 4H15M13 7H15M13 10H15" stroke="#3a70c0"/><path d="M3 12 L8 9 L10 11 L14 5" stroke="#30a040" stroke-width="2" fill="none"/></svg><div style="left:403px;top:5px;width:1px;height:18px;background:#a8a8a8"></div><svg style="position:absolute;left:413px;top:6px" width="17" height="16" viewBox="0 0 17 16"><rect x="4.5" y="0.5" width="7" height="5" rx="1" fill="#eee" stroke="#222"/><rect x="0.5" y="4" width="16" height="11" rx="2" fill="#2c3034" stroke="#111"/><rect x="2" y="5.5" width="13" height="1" fill="#5a6068"/><circle cx="8" cy="10.3" r="4" fill="#0e1012" stroke="#4a5058" stroke-width="0.8"/><circle cx="7.2" cy="9.6" r="1.3" fill="#d0d0d0"/></svg><div style="left:438px;top:5px;width:1px;height:18px;background:#a8a8a8"></div><svg style="position:absolute;left:448px;top:6px" width="17" height="16" viewBox="0 0 17 16"><rect x="0.5" y="0.5" width="11" height="14" fill="#fff" stroke="#222" stroke-dasharray="1.2 1"/><path d="M3 3.5H10M3 5.5H10" stroke="#c0c0c0" stroke-width="0.8"/><rect x="3" y="7.5" width="7" height="5" fill="#5a9ad8"/><rect x="4" y="8" width="2" height="1.5" fill="#f0f0a0"/><rect x="11" y="0.5" width="5" height="15" rx="1" fill="#e8b030" stroke="#c08010"/><path d="M13.5 2.5V13.5" stroke="#fff0a0" stroke-dasharray="0.8 1.2"/></svg><svg style="position:absolute;left:471px;top:12px" width="5" height="3" viewBox="0 0 5 3"><path d="M0 0 H5 L2.5 3 Z" fill="#000"/></svg><div style="left:482px;top:5px;width:1px;height:18px;background:#a8a8a8"></div><svg style="position:absolute;left:490px;top:9px" width="11" height="11" viewBox="0 0 11 11"><path d="M1.5 1.5 L9.5 9.5 M9.5 1.5 L1.5 9.5" stroke="#000" stroke-width="2.4" stroke-linecap="square"/></svg><svg style="position:absolute;left:806px;top:4px" width="20" height="20" viewBox="0 0 20 20"><path d="M16.5 6.5 Q12 0 6.5 7" stroke="#108810" stroke-width="3" fill="none"/><path d="M16 6.5 Q12 1 6.5 7" stroke="#30e030" stroke-width="1.5" fill="none"/><path d="M1.5 7 L10.5 7 L6 12.5 Z" fill="#18b018" stroke="#0a7a0a" stroke-width="0.6"/><path d="M3.5 13 Q8 20 13.5 12.5" stroke="#108810" stroke-width="3" fill="none"/><path d="M9 12.5 L18.5 12.5 L14 7 Z" fill="#18b018" stroke="#0a7a0a" stroke-width="0.6"/></svg><div style="left:833px;top:5px;width:1px;height:18px;background:#a8a8a8"></div><svg style="position:absolute;left:842px;top:5px" width="18" height="17" viewBox="0 0 18 17"><path d="M1.5 1.5 H7.5 L10.5 4.5 V13.5 H1.5 Z" fill="#f8f8f8" stroke="#c4c4c4"/><path d="M7.5 5.5 H13.5 L16.5 8.5 V17 H7.5 Z" fill="#fcfcfc" stroke="#bcbcbc"/></svg><div style="left:868px;top:5px;width:1px;height:18px;background:#a8a8a8"></div><svg style="position:absolute;left:878px;top:5px" width="18" height="18" viewBox="0 0 18 18"><rect x="1.5" y="1.5" width="13" height="15" rx="1" fill="#d8e8fa" stroke="#3a70d0" stroke-width="1.4"/><rect x="3" y="12.5" width="10" height="2" fill="#50b0f0"/><path d="M4.5 14.5 L15.5 3.5" stroke="#c07818" stroke-width="4" stroke-linecap="round"/><path d="M5 14 L15 4" stroke="#f8e070" stroke-width="2.2"/><path d="M4 15 L5.5 13.5" stroke="#604010" stroke-width="2"/></svg><div style="left:903px;top:5px;width:1px;height:18px;background:#a8a8a8"></div><svg style="position:absolute;left:913px;top:6px" width="17" height="16" viewBox="0 0 17 16"><rect x="4.5" y="0.5" width="7" height="5" rx="1" fill="#eee" stroke="#222"/><rect x="0.5" y="4" width="16" height="11" rx="2" fill="#2c3034" stroke="#111"/><rect x="2" y="5.5" width="13" height="1" fill="#5a6068"/><circle cx="8" cy="10.3" r="4" fill="#0e1012" stroke="#4a5058" stroke-width="0.8"/><circle cx="7.2" cy="9.6" r="1.3" fill="#d0d0d0"/></svg><div style="left:933px;top:5px;width:1px;height:18px;background:#a8a8a8"></div><svg style="position:absolute;left:941px;top:12px" width="10" height="5" viewBox="0 0 10 5"><path d="M0 0 H10 L5 5 Z" fill="#000"/></svg><svg style="position:absolute;left:963px;top:8px" width="11" height="11" viewBox="0 0 11 11"><path d="M1.5 1.5 L9.5 9.5 M9.5 1.5 L1.5 9.5" stroke="#000" stroke-width="2.4" stroke-linecap="square"/></svg><svg style="position:absolute;left:965px;top:547px" width="11" height="11" viewBox="0 0 11 11"><path d="M1.5 1.5 L9.5 9.5 M9.5 1.5 L1.5 9.5" stroke="#000" stroke-width="2.4" stroke-linecap="square"/></svg><svg style="position:absolute;left:15px;top:9px" width="13" height="12" viewBox="0 0 13 12"><rect x="0" y="0" width="12" height="11" fill="#d8f0d8"/><rect x="0" y="0" width="3.5" height="11" fill="#fafafa"/><rect x="1" y="1" width="1.4" height="1.4" fill="#000"/><rect x="1" y="3" width="1.4" height="1.4" fill="#000"/><rect x="1" y="5" width="1.4" height="1.4" fill="#000"/><rect x="1" y="7" width="1.4" height="1.4" fill="#000"/><rect x="1" y="9" width="1.4" height="1.4" fill="#000"/><rect x="4" y="1" width="7" height="2" fill="#203060"/><rect x="4" y="3" width="7" height="2" fill="#a0c0e0"/><path d="M4 5.5H7M8 5.5H11" stroke="#203060"/><rect x="11" y="0" width="1.3" height="11" fill="#283828"/><rect x="0" y="10.3" width="12" height="0.8" fill="#606860"/></svg><svg style="position:absolute;left:16px;top:517px" width="13" height="12" viewBox="0 0 13 12"><rect x="0" y="0" width="12" height="11" fill="#d8f0d8"/><rect x="0" y="0" width="3.5" height="11" fill="#fafafa"/><rect x="1" y="1" width="1.4" height="1.4" fill="#000"/><rect x="1" y="3" width="1.4" height="1.4" fill="#000"/><rect x="1" y="5" width="1.4" height="1.4" fill="#000"/><rect x="1" y="7" width="1.4" height="1.4" fill="#000"/><rect x="1" y="9" width="1.4" height="1.4" fill="#000"/><rect x="4" y="1" width="7" height="2" fill="#203060"/><rect x="4" y="3" width="7" height="2" fill="#a0c0e0"/><path d="M4 5.5H7M8 5.5H11" stroke="#203060"/><rect x="11" y="0" width="1.3" height="11" fill="#283828"/><rect x="0" y="10.3" width="12" height="0.8" fill="#606860"/></svg><div style="left:520px;top:4px;font:bold 15px/17px 'Liberation Sans',sans-serif;color:#3399ff;-webkit-text-stroke:0.9px #3399ff">C</div><svg style="position:absolute;left:519px;top:5px" width="19" height="18" viewBox="0 0 19 18"><path d="M16.5 8 Q14.5 7.5 14 10 L13.5 14 Q13 16.5 10.5 16" stroke="#e000e0" stroke-width="2" fill="none"/><path d="M12 11.5 H17" stroke="#a000a0" stroke-width="1.2"/></svg><div style="left:523px;top:511px;font:bold 15px/17px 'Liberation Sans',sans-serif;color:#3399ff;-webkit-text-stroke:0.9px #3399ff">C</div><svg style="position:absolute;left:522px;top:512px" width="19" height="18" viewBox="0 0 19 18"><path d="M16.5 8 Q14.5 7.5 14 10 L13.5 14 Q13 16.5 10.5 16" stroke="#e000e0" stroke-width="2" fill="none"/><path d="M12 11.5 H17" stroke="#a000a0" stroke-width="1.2"/></svg><svg style="position:absolute;left:160px;top:519px" width="7" height="7" viewBox="0 0 7 7"><path d="M1 1 L6 6 M6 1 L1 6" stroke="#000" stroke-width="1.5"/><rect x="2.5" y="2.5" width="2" height="2" fill="#000"/></svg><svg style="position:absolute;left:260px;top:517px" width="7" height="7" viewBox="0 0 7 7"><path d="M1 1 L6 6 M6 1 L1 6" stroke="#000" stroke-width="1.5"/><rect x="2.5" y="2.5" width="2" height="2" fill="#000"/></svg><svg style="position:absolute;left:683px;top:519px" width="7" height="7" viewBox="0 0 7 7"><path d="M1 1 L6 6 M6 1 L1 6" stroke="#000" stroke-width="1.5"/><rect x="2.5" y="2.5" width="2" height="2" fill="#000"/></svg><svg style="position:absolute;left:845px;top:517px" width="7" height="7" viewBox="0 0 7 7"><path d="M1 1 L6 6 M6 1 L1 6" stroke="#000" stroke-width="1.5"/><rect x="2.5" y="2.5" width="2" height="2" fill="#000"/></svg><svg style="position:absolute;left:182px;top:512px" width="17" height="17" viewBox="0 0 17 17"><rect x="0.5" y="0.5" width="16" height="16" fill="#fbf8f4" stroke="#c89c78"/><path d="M2 2.5H5M3 4.5H6M3 6.5H6M3 8.5H5M3 10.5H5M3 12.5H5" stroke="#222" stroke-width="1"/><path d="M6 2.5H7M7 4.5H9" stroke="#999" stroke-width="1"/><path d="M14.3 8.8 Q13.6 8 12 8 Q9.8 8 9.8 9.8 Q9.8 11.2 12 11.6 Q14.3 12 14.3 13.5 Q14.3 15 12 15 Q10.3 15 9.6 14" stroke="#000080" stroke-width="2" fill="none"/></svg></body></html>
